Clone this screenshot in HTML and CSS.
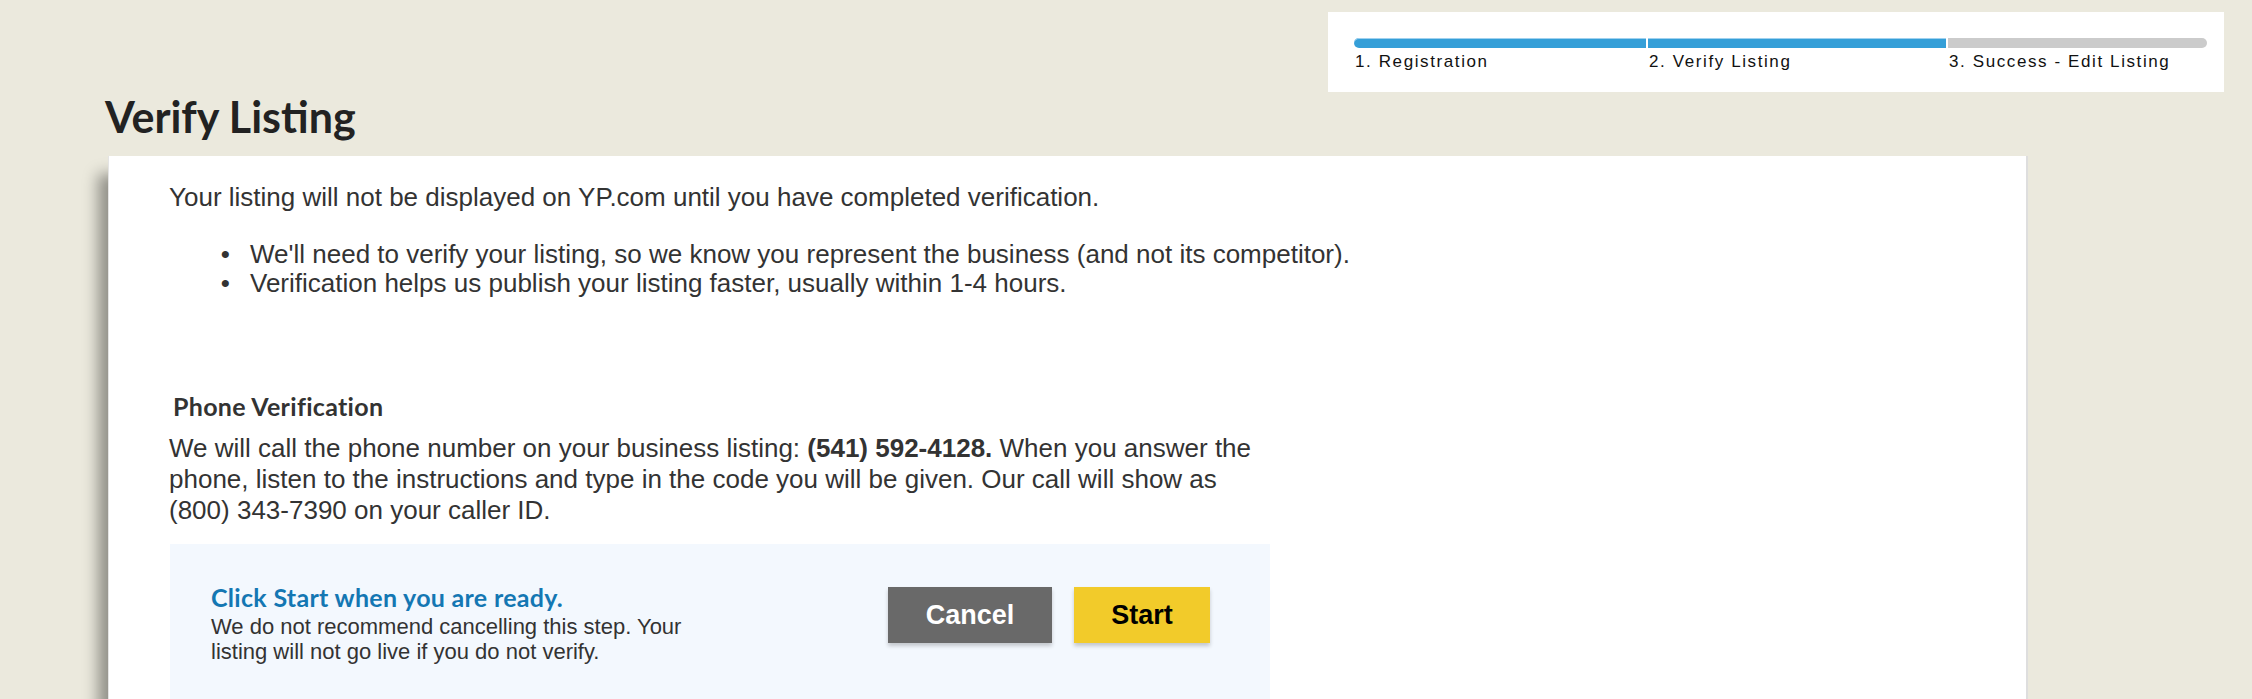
FILE: index.html
```html
<!DOCTYPE html>
<html lang="en">

<head>
    <meta charset="UTF-8">
    <meta name="viewport" content="width=device-width, initial-scale=1.0">
    <title>Verify Listing</title>
    <link rel="stylesheet" href="styles.css">
</head>

<body>
    <header class="top">
        <div class="steps">
            <div class="step done">
                <span class="step-bar"></span>
                <span class="step-label">1. Registration</span>
            </div>
            <div class="step done">
                <span class="step-bar"></span>
                <span class="step-label">2. Verify Listing</span>
            </div>
            <div class="step">
                <span class="step-bar"></span>
                <span class="step-label">3. Success - Edit Listing</span>
            </div>
        </div>
    </header>

    <main class="page">
        <h1 class="page-title">Verify Listing</h1>

        <section class="card">
            <p class="intro">Your listing will not be displayed on YP.com until you have completed verification.</p>
            <ul class="reasons">
                <li>We'll need to verify your listing, so we know you represent the business (and not its competitor).</li>
                <li>Verification helps us publish your listing faster, usually within 1-4 hours.</li>
            </ul>

            <h2 class="section-title">Phone Verification</h2>
            <p class="call-info">We will call the phone number on your business listing: <b>(541) 592-4128.</b> When you answer the phone, listen to the instructions and type in the code you will be given. Our call will show as (800) 343-7390 on your caller ID.</p>

            <div class="prompt">
                <div class="prompt-text">
                    <h3>Click Start when you are ready.</h3>
                    <p>We do not recommend cancelling this step. Your listing will not go live if you do not verify.</p>
                </div>
                <div class="prompt-actions">
                    <button class="btn btn-cancel">Cancel</button>
                    <button class="btn btn-start">Start</button>
                </div>
            </div>
        </section>
    </main>
</body>

</html>
```

FILE: styles.css
```css
body {
    margin: 0;
    font-family: "Liberation Sans", Arial, sans-serif;
    background-color: #ebe9dd;
    color: #333;
    overflow: hidden;
}

/* progress steps, top right */
.top {
    display: flex;
    justify-content: flex-end;
    padding: 12px 28px 0 0;
}

.steps {
    display: grid;
    grid-template-columns: 292px 298px 259px;
    column-gap: 2px;
    width: 896px;
    box-sizing: border-box;
    padding: 26px 17px 20px 26px;
    background: #fff;
}

.step-bar {
    display: block;
    height: 10px;
    background: #cbcbcb;
}

.step.done .step-bar {
    background: #359fd8;
    box-shadow: inset 0 1px 0 #9fd1ef;
}

.step:first-child .step-bar {
    border-radius: 5px 0 0 5px;
}

.step:last-child .step-bar {
    border-radius: 0 5px 5px 0;
}

.step-label {
    display: block;
    margin-top: 4px;
    padding-left: 1px;
    font-size: 17px;
    line-height: 20px;
    letter-spacing: 1.6px;
    color: #111;
}

/* main area */
.page {
    padding-left: 105px;
}

.page-title {
    margin: 0;
    font-family: Lato, "Liberation Sans", sans-serif;
    font-weight: 700;
    font-size: 43px;
    line-height: 50px;
    color: #222;
}

.card {
    width: 1920px;
    min-height: 600px;
    box-sizing: border-box;
    margin: 14px 0 0 3px;
    padding: 26px 0 0 60px;
    background: #fff;
    border-left: 1px solid #e4e4e4;
    border-right: 2px solid #dedede;
    box-shadow: -14px 14px 14px -4px rgba(0, 0, 0, 0.38);
}

.intro {
    margin: 0;
    font-size: 26px;
}

.reasons {
    margin: 27px 0 0;
    padding-left: 81px;
    font-size: 26px;
    line-height: 29.1px;
}

.reasons li::marker {
    content: "\2022\2002\00a0";
}

.section-title {
    margin: 94px 0 0;
    padding-left: 4px;
    font-family: Lato, "Liberation Sans", sans-serif;
    font-weight: 700;
    font-size: 25px;
    line-height: 29px;
    letter-spacing: 0.3px;
    color: #333;
}

.call-info {
    max-width: 1101px;
    margin: 12px 0 0;
    font-size: 26px;
}

/* start prompt */
.prompt {
    display: flex;
    justify-content: space-between;
    align-items: flex-start;
    width: 1100px;
    box-sizing: border-box;
    margin: 18px 0 0 1px;
    padding: 39px 60px 60px 41px;
    background: #f3f8fe;
}

.prompt-text h3 {
    margin: 0;
    font-family: Lato, "Liberation Sans", sans-serif;
    font-weight: 700;
    font-size: 25px;
    line-height: 29px;
    letter-spacing: 0.3px;
    color: #1477b3;
}

.prompt-text p {
    max-width: 480px;
    margin: 2px 0 0;
    font-size: 22px;
    line-height: 25.3px;
    color: #333;
}

.prompt-actions {
    display: flex;
    gap: 22px;
    margin-top: 4px;
}

.btn {
    height: 56px;
    border: none;
    font-family: "Liberation Sans", Arial, sans-serif;
    font-weight: bold;
    font-size: 27px;
    cursor: pointer;
    box-shadow: 0px 3px 4px rgba(0, 0, 0, 0.2);
}

.btn-cancel {
    width: 164px;
    background: #696969;
    color: #fff;
}

.btn-start {
    width: 136px;
    background: #f2cb2a;
    color: #000;
}
```
